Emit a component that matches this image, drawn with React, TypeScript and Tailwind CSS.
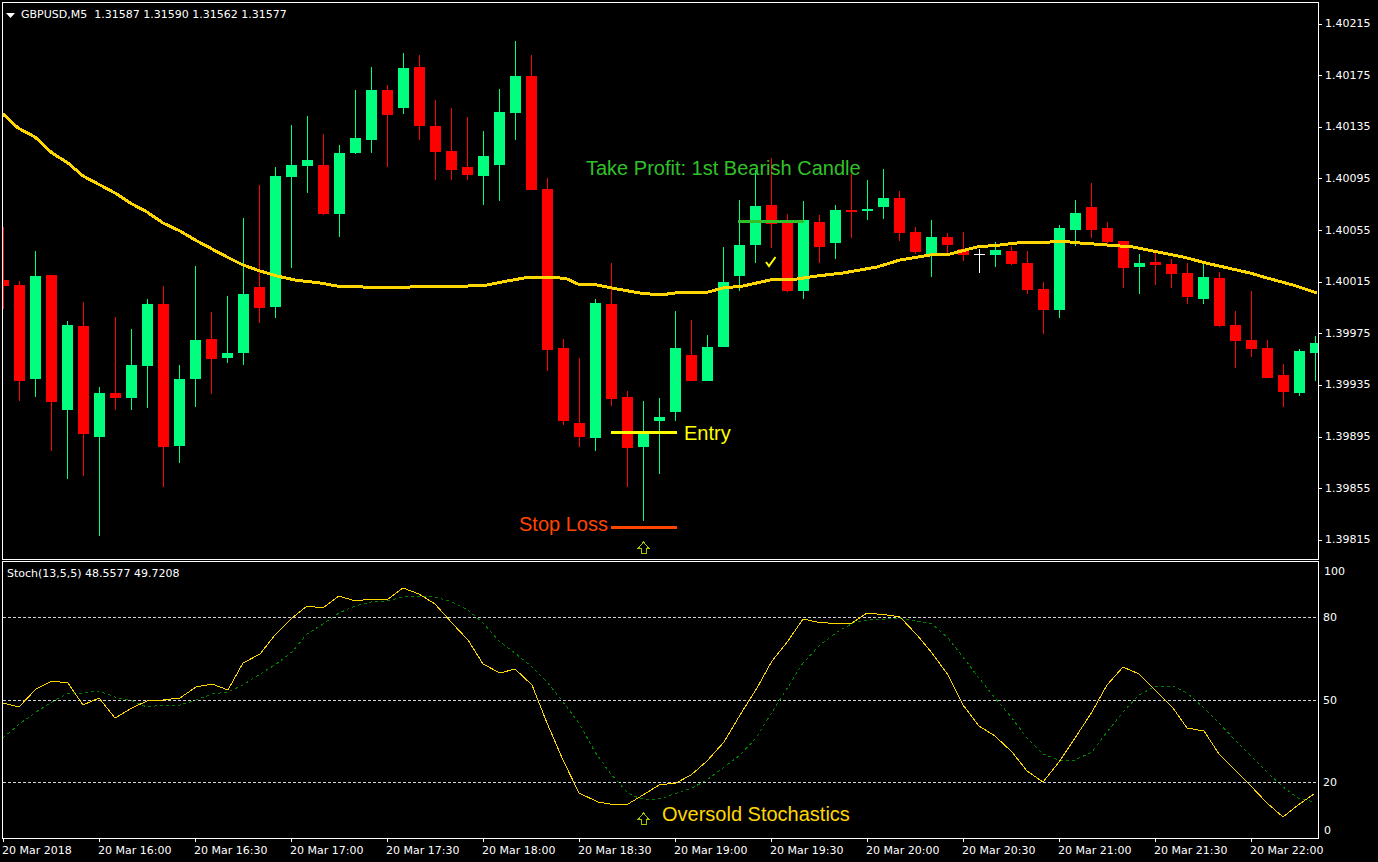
type Candle = [kind: 'g' | 'r' | 'w', wickTop: number, bodyTop: number, bodyBottom: number, wickBottom: number];

// one candle per 16px, first wick sits at x=3
const candles: Candle[] = [
  ['r', 227, 280, 286, 309], ['r', 281, 285, 381, 401], ['g', 251, 276, 379, 397], ['r', 275, 275, 402, 451],
  ['g', 321, 325, 410, 479], ['r', 302, 326, 434, 476], ['g', 387, 393, 437, 536], ['r', 317, 393, 398, 410],
  ['g', 329, 365, 398, 410], ['g', 299, 304, 366, 408], ['r', 286, 304, 447, 487], ['g', 365, 379, 446, 463],
  ['g', 266, 340, 379, 407], ['r', 312, 339, 359, 394], ['g', 296, 353, 358, 363], ['g', 218, 294, 353, 365],
  ['r', 185, 287, 308, 323], ['g', 167, 176, 307, 318], ['g', 125, 165, 177, 268], ['g', 116, 160, 166, 193],
  ['r', 134, 165, 214, 215], ['g', 145, 153, 214, 237], ['g', 90, 138, 153, 154], ['g', 67, 90, 140, 153],
  ['r', 85, 90, 115, 167], ['g', 53, 68, 108, 114], ['r', 55, 67, 126, 140], ['r', 100, 126, 152, 180],
  ['r', 108, 151, 170, 180], ['r', 117, 167, 175, 180], ['g', 131, 156, 176, 205], ['g', 89, 112, 165, 201],
  ['g', 41, 76, 113, 140], ['r', 55, 76, 190, 190], ['r', 178, 189, 350, 371], ['r', 339, 348, 421, 425],
  ['r', 358, 423, 437, 447], ['g', 299, 303, 438, 451], ['r', 263, 304, 399, 406], ['r', 391, 397, 448, 487],
  ['g', 401, 432, 447, 521], ['g', 398, 417, 421, 474], ['g', 311, 348, 412, 421], ['r', 320, 355, 381, 381],
  ['g', 335, 347, 381, 381], ['g', 247, 282, 347, 347], ['g', 200, 245, 276, 291], ['g', 170, 206, 245, 263],
  ['r', 158, 205, 224, 248], ['r', 214, 220, 291, 292], ['g', 201, 220, 291, 299], ['r', 215, 222, 247, 263],
  ['g', 205, 210, 243, 259], ['r', 174, 210, 212, 238], ['g', 180, 209, 211, 220], ['g', 169, 198, 207, 219],
  ['r', 191, 198, 233, 241], ['r', 227, 232, 252, 254], ['g', 220, 237, 254, 277], ['r', 233, 237, 245, 254],
  ['r', 232, 249, 255, 261], ['w', 249, 254, 255, 273], ['g', 242, 250, 255, 267], ['r', 246, 251, 264, 265],
  ['r', 251, 263, 290, 294], ['r', 282, 289, 310, 334], ['g', 225, 228, 310, 318], ['g', 200, 213, 230, 246],
  ['r', 183, 207, 230, 238], ['r', 222, 228, 242, 244], ['r', 241, 241, 268, 288], ['g', 254, 263, 267, 294],
  ['r', 253, 262, 265, 285], ['r', 259, 264, 274, 288], ['r', 263, 273, 297, 304], ['g', 264, 277, 299, 304],
  ['r', 272, 278, 326, 327], ['r', 311, 325, 341, 368], ['r', 291, 340, 349, 357], ['r', 340, 348, 378, 378],
  ['r', 364, 375, 392, 407], ['g', 349, 351, 393, 396], ['g', 336, 343, 353, 381],
];

const ma =
  '3,114 18,128 35,137 52,153 68,163 83,176 100,185 115,193 132,204 147,212 163,223 180,231 197,241 212,249 227,257 243,265 260,271 277,276 295,280 320,283 337,286 363,287 387,288 410,287 433,286 450,287 487,285 507,281 530,277 553,277 567,279 578,284 597,285 617,289 640,293 660,295 683,292 708,292 723,288 743,286 770,280 797,279 817,276 843,273 877,267 900,260 930,255 950,254 977,247 1000,245 1025,242 1040,243 1060,241 1080,243 1107,245 1133,247 1163,253 1183,257 1210,264 1250,273 1267,278 1293,285 1317,293';

const stochMain =
  '3,703 19,707 36,689 52,681 68,683 83,705 99,698 115,718 132,708 147,701 163,700 180,698 196,687 212,684 228,690 243,663 260,654 275,635 292,618 307,606 323,608 339,596 355,601 371,599 387,600 403,588 419,594 435,604 452,623 468,640 483,664 500,673 515,669 532,685 547,723 563,760 579,793 598,802 610,804 628,804 643,795 659,785 676,783 691,775 707,761 724,742 740,715 757,688 772,661 788,641 803,619 817,622 828,623 852,623 867,613 887,615 900,617 917,635 932,653 948,675 963,705 979,726 995,736 1012,752 1027,771 1043,782 1059,762 1075,738 1092,712 1107,685 1123,667 1139,674 1156,691 1173,708 1187,728 1204,731 1219,754 1235,770 1250,785 1267,803 1283,817 1298,805 1314,794';

const stochSignal =
  '3,738 18,725 36,712 52,702 68,693 83,693 99,691 115,697 132,701 147,707 163,705 180,705 196,700 212,694 228,692 243,685 260,674 275,665 292,652 307,634 323,624 339,613 355,606 371,602 387,601 403,597 419,596 435,597 452,602 468,610 483,623 500,642 515,653 532,667 547,682 563,702 579,723 595,752 610,773 627,792 633,796 647,800 663,798 677,793 692,788 707,780 723,768 740,755 757,737 772,712 788,687 803,663 820,645 837,632 853,623 867,620 887,619 900,618 917,621 932,624 948,638 963,657 979,678 995,698 1012,718 1027,738 1043,754 1059,760 1075,760 1092,752 1107,732 1123,712 1139,695 1156,686 1173,686 1187,693 1204,708 1219,723 1235,740 1250,755 1267,772 1283,787 1298,798 1314,802';

const prices = ['1.40215', '1.40175', '1.40135', '1.40095', '1.40055', '1.40015', '1.39975', '1.39935', '1.39895', '1.39855', '1.39815'];
const times = ['20 Mar 2018', '20 Mar 16:00', '20 Mar 16:30', '20 Mar 17:00', '20 Mar 17:30', '20 Mar 18:00', '20 Mar 18:30', '20 Mar 19:00', '20 Mar 19:30', '20 Mar 20:00', '20 Mar 20:30', '20 Mar 21:00', '20 Mar 21:30', '20 Mar 22:00'];

const candleColor = { g: '#00ff7f', r: '#ff0000', w: '#ffffff' };

function UpArrow({ top }: { top: number }) {
  return (
    <path
      d={`M643.5 ${top} L638.5 ${top + 6} L641 ${top + 6} L641 ${top + 11} L646 ${top + 11} L646 ${top + 6} L648.5 ${top + 6} Z`}
      fill="none"
      stroke="#a8c400"
      strokeWidth="1"
    />
  );
}

function CandleChart() {
  return (
    <svg className="absolute inset-0 block w-[1315px] h-[556px]" viewBox="3 3 1315 556" shapeRendering="crispEdges">
      {candles.map(([kind, wickTop, bodyTop, bodyBottom, wickBottom], i) => {
        const x = 3 + i * 16;
        const bodyX = Math.max(x - 5, 3);
        return (
          <g key={i} fill={candleColor[kind]}>
            <rect x={x} y={wickTop} width={1} height={wickBottom - wickTop} />
            <rect x={bodyX} y={bodyTop} width={x + 6 - bodyX} height={bodyBottom - bodyTop} />
          </g>
        );
      })}
      <polyline points={ma} fill="none" stroke="#ffd700" strokeWidth="3" />
      <rect x="738" y="220" width="66" height="3" fill="#32c02a" />
      <rect x="611" y="431" width="66" height="3" fill="#ffff00" />
      <rect x="611" y="526" width="66" height="3" fill="#ff4500" />
      <path d="M766 262 L769 266 L775.5 257" fill="none" stroke="#ffff00" strokeWidth="2" shapeRendering="auto" />
      <UpArrow top={542} />
    </svg>
  );
}

function StochChart() {
  return (
    <svg className="absolute inset-0 block w-[1315px] h-[276px]" viewBox="3 562 1315 276" shapeRendering="crispEdges">
      {[617, 700, 782].map((y) => (
        <line key={y} x1="3" x2="1318" y1={y + 0.5} y2={y + 0.5} stroke="#d4d4d4" strokeDasharray="3 2" />
      ))}
      <polyline points={stochSignal} fill="none" stroke="#008000" strokeDasharray="3 3" />
      <polyline points={stochMain} fill="none" stroke="#ffd700" />
      <UpArrow top={813} />
    </svg>
  );
}

export default function App() {
  return (
    <div className="w-[1378px] h-[862px] overflow-hidden bg-black text-white text-[11px] leading-4 font-['DejaVu_Sans',sans-serif]">
      <div className="flex pt-[2px] pl-[2px]">
        <div className="relative w-[1317px] h-[558px] border border-white">
          <CandleChart />
          <div className="absolute left-[3px] top-[4px] flex items-center gap-[6px]">
            <svg width="9" height="5" viewBox="0 0 9 5">
              <path d="M0 0H9L4.5 5Z" fill="#fff" />
            </svg>
            <span className="whitespace-pre">GBPUSD,M5  1.31587 1.31590 1.31562 1.31577</span>
          </div>
          <span className="absolute left-[583px] top-[154px] text-[20px] leading-[22px] text-[#32c02a] font-['Liberation_Sans',sans-serif] whitespace-nowrap">Take Profit: 1st Bearish Candle</span>
          <span className="absolute left-[681px] top-[419px] text-[20px] leading-[22px] text-[#ffff00] font-['Liberation_Sans',sans-serif]">Entry</span>
          <span className="absolute left-[516px] top-[510px] text-[20px] leading-[22px] text-[#ff4500] font-['Liberation_Sans',sans-serif] whitespace-nowrap">Stop Loss</span>
        </div>
        <div className="flex flex-col gap-[35.65px] pt-[14px]">
          {prices.map((p) => (
            <div key={p} className="flex items-center h-4">
              <div className="w-[3px] h-px bg-white" />
              <span className="ml-[3px]">{p}</span>
            </div>
          ))}
        </div>
      </div>
      <div className="flex mt-[1px] pl-[2px]">
        <div className="relative w-[1317px] h-[278px] border border-white">
          <StochChart />
          <span className="absolute left-[4px] top-[4px]">Stoch(13,5,5) 48.5577 49.7208</span>
          <span className="absolute left-[659px] top-[241px] text-[20px] leading-[22px] text-[#ffd700] font-['Liberation_Sans',sans-serif] whitespace-nowrap">Oversold Stochastics</span>
        </div>
        <div className="flex flex-col pl-[4px] pt-[3px]">
          <div className="h-[46px] pl-[1px]">100</div>
          <div className="h-[83px]">80</div>
          <div className="h-[82px]">50</div>
          <div className="h-[48px]">20</div>
          <div className="pl-[1px]">0</div>
        </div>
      </div>
      <div className="flex pl-[3px]">
        {times.map((t) => (
          <div key={t} className="w-[96px] shrink-0">
            <div className="w-px h-[3px] bg-white" />
            <div className="-ml-px mt-px whitespace-nowrap">{t}</div>
          </div>
        ))}
      </div>
    </div>
  );
}
